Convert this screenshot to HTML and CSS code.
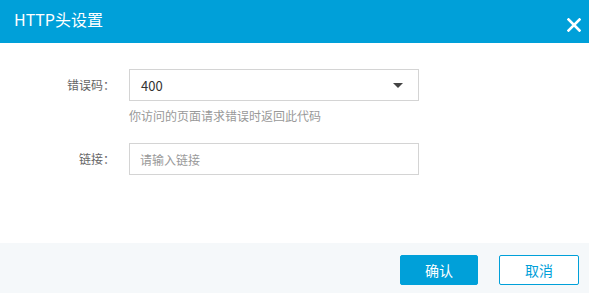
FILE: index.html
```html
<!DOCTYPE html>
<html lang="zh-CN">
<head>
<meta charset="utf-8">
<title>HTTP头设置</title>
<link rel="stylesheet" href="styles.css">
</head>
<body>
<div class="dialog">
  <header class="dlg-head">
    <h1 class="dlg-title">HTTP头设置</h1>
    <button class="dlg-close" aria-label="关闭">
      <svg width="14" height="14" viewBox="0 0 14 14"><path d="M1.5 1.5L12.5 12.5M12.5 1.5L1.5 12.5" stroke="#fff" stroke-width="2.6" stroke-linecap="square" fill="none"/></svg>
    </button>
  </header>
  <main class="dlg-body">
    <div class="form-row">
      <label class="form-label">错误码：</label>
      <div class="form-field">
        <div class="select">
          <span class="select-value">400</span>
          <span class="select-arrow"></span>
        </div>
        <p class="form-help">你访问的页面请求错误时返回此代码</p>
      </div>
    </div>
    <div class="form-row">
      <label class="form-label">链接：</label>
      <div class="form-field">
        <input class="text-input" type="text" placeholder="请输入链接">
      </div>
    </div>
  </main>
  <footer class="dlg-foot">
    <button class="btn btn-primary">确认</button>
    <button class="btn btn-default">取消</button>
  </footer>
</div>
</body>
</html>
```

FILE: styles.css
```css
* { box-sizing: border-box; }
html, body { margin: 0; padding: 0; background: #fff; }
body {
  font-family: "Noto Sans CJK SC", "Noto Sans", sans-serif;
  width: 589px;
  height: 293px;
  overflow: hidden;
}
.dialog { display: flex; flex-direction: column; height: 293px; }
.dlg-head {
  height: 43px;
  background: #00a0d9;
  display: flex;
  align-items: flex-start;
  justify-content: space-between;
  padding: 0 8px 0 14px;
}
.dlg-title {
  margin: 0;
  padding-top: 8px;
  font-size: 16px;
  line-height: 22px;
  font-weight: normal;
  color: #fff;
}
.dlg-close {
  margin-top: 18px;
  padding: 0;
  border: 0;
  background: none;
  width: 14px;
  height: 14px;
  display: flex;
}
.dlg-body {
  height: 200px;
  padding-top: 26px;
}
.form-row { display: flex; align-items: flex-start; margin-bottom: 18px; }
.form-label {
  width: 115px;
  margin-right: 14px;
  text-align: right;
  font-size: 12px;
  line-height: 32px;
  color: #666;
}
.form-field { width: 290px; }
.select {
  height: 32px;
  border: 1px solid #d4d4d4;
  display: flex;
  align-items: center;
  justify-content: space-between;
  padding: 0 11px 0 11px;
}
.select-value { font-size: 13px; color: #333; }
.select-arrow {
  width: 0; height: 0;
  border-left: 5px solid transparent;
  border-right: 5px solid transparent;
  border-top: 5px solid #444;
  margin-right: 4px;
}
.form-help {
  margin: 6px 0 0;
  font-size: 12px;
  line-height: 18px;
  color: #999;
}
.text-input {
  display: block;
  width: 290px;
  height: 32px;
  border: 1px solid #d4d4d4;
  padding: 0 10px;
  font-family: inherit;
  font-size: 12px;
  color: #333;
  outline: none;
}
.text-input::placeholder { color: #999; }
.dlg-foot {
  flex: 1;
  background: #f5f8fa;
  display: flex;
  justify-content: flex-end;
  align-items: flex-start;
  gap: 21px;
  padding: 12px 10px 0 0;
}
.btn {
  height: 30px;
  border-radius: 2px;
  font-family: inherit;
  font-size: 14px;
  padding: 0;
}
.btn-primary {
  width: 78px;
  background: #00a0d9;
  border: 1px solid #00a0d9;
  color: #fff;
}
.btn-default {
  width: 80px;
  background: #fff;
  border: 1px solid #00a0d9;
  color: #00a0d9;
}
```
